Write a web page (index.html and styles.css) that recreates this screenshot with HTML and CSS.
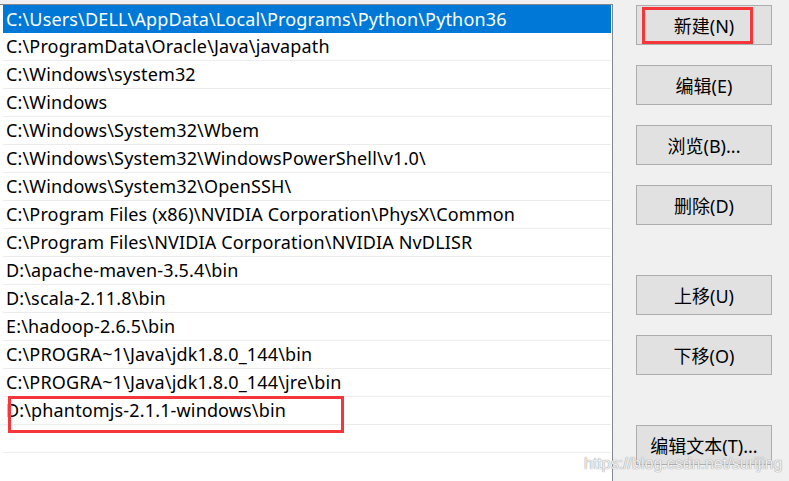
FILE: index.html
```html
<!DOCTYPE html>
<html lang="zh-CN">
<head>
    <meta charset="UTF-8">
    <meta name="viewport" content="width=device-width, initial-scale=1.0">
    <title>编辑环境变量</title>
    <link rel="stylesheet" href="styles.css">
</head>
<body>

    <div class="path-editor">
        <ul class="path-list">
            <li class="path-item selected">C:\Users\DELL\AppData\Local\Programs\Python\Python36</li>
            <li class="path-item">C:\ProgramData\Oracle\Java\javapath</li>
            <li class="path-item">C:\Windows\system32</li>
            <li class="path-item">C:\Windows</li>
            <li class="path-item">C:\Windows\System32\Wbem</li>
            <li class="path-item">C:\Windows\System32\WindowsPowerShell\v1.0\</li>
            <li class="path-item">C:\Windows\System32\OpenSSH\</li>
            <li class="path-item">C:\Program Files (x86)\NVIDIA Corporation\PhysX\Common</li>
            <li class="path-item">C:\Program Files\NVIDIA Corporation\NVIDIA NvDLISR</li>
            <li class="path-item">D:\apache-maven-3.5.4\bin</li>
            <li class="path-item">D:\scala-2.11.8\bin</li>
            <li class="path-item">E:\hadoop-2.6.5\bin</li>
            <li class="path-item">C:\PROGRA~1\Java\jdk1.8.0_144\bin</li>
            <li class="path-item">C:\PROGRA~1\Java\jdk1.8.0_144\jre\bin</li>
            <li class="path-item">D:\phantomjs-2.1.1-windows\bin<span class="mark mark-row"></span></li>
            <li class="path-item"></li>
        </ul>

        <div class="actions">
            <button class="btn">新建(N)<span class="mark mark-btn"></span></button>
            <button class="btn">编辑(E)</button>
            <button class="btn">浏览(B)...</button>
            <button class="btn">删除(D)</button>
            <button class="btn group-start">上移(U)</button>
            <button class="btn">下移(O)</button>
            <button class="btn group-start">编辑文本(T)...</button>
        </div>
    </div>

    <div class="watermark">https://blog.csdn.net/surijing</div>

</body>
</html>
```

FILE: styles.css
```css
body {
    font-family: "Noto Sans", "Noto Sans CJK SC", sans-serif;
    background-color: #f0f0f0;
    margin: 0;
    padding: 0;
    width: 789px;
    height: 481px;
    overflow: hidden;
    position: relative;
}

.path-editor {
    display: flex;
    align-items: flex-start;
    height: 100%;
}

.path-list {
    list-style: none;
    margin: 4px 0 0 0;
    padding: 0 1px 0 3px;
    width: 608px;
    height: 477px;
    background-color: #fff;
    border-top: 1px solid #828790;
    border-right: 1px solid #828790;
}

.path-item {
    position: relative;
    height: 27px;
    line-height: 27px;
    padding-left: 3px;
    border-bottom: 1px solid #ececec;
    font-size: 18px;
    letter-spacing: 0.15px;
    color: #000;
    white-space: nowrap;
}

.path-item.selected {
    height: 28px;
    line-height: 28px;
    border-bottom: none;
    background-color: #0078d7;
    color: #fff;
}

.actions {
    display: flex;
    flex-direction: column;
    gap: 20px;
    margin-left: 23px;
    margin-top: 5px;
    width: 136px;
}

.btn {
    position: relative;
    width: 136px;
    height: 40px;
    padding: 0;
    border: 1px solid #adadad;
    background-color: #e1e1e1;
    font-family: "Noto Sans", "Noto Sans CJK SC", sans-serif;
    font-size: 18px;
    color: #000;
}

.btn.group-start {
    margin-top: 30px;
}

.mark {
    position: absolute;
    border: 3px solid #f5373b;
    box-sizing: border-box;
}

.mark-btn {
    left: 5px;
    top: 1px;
    width: 111px;
    height: 37px;
}

.mark-row {
    left: 5px;
    top: -1px;
    width: 336px;
    height: 37px;
}

.watermark {
    position: absolute;
    left: 584px;
    top: 456px;
    line-height: 16px;
    font-family: "Liberation Sans", sans-serif;
    font-size: 16px;
    color: rgba(255, 255, 255, 0.85);
    text-shadow: 0 0 1px #9a9a9a, 0 0 1px #9a9a9a;
}
```
